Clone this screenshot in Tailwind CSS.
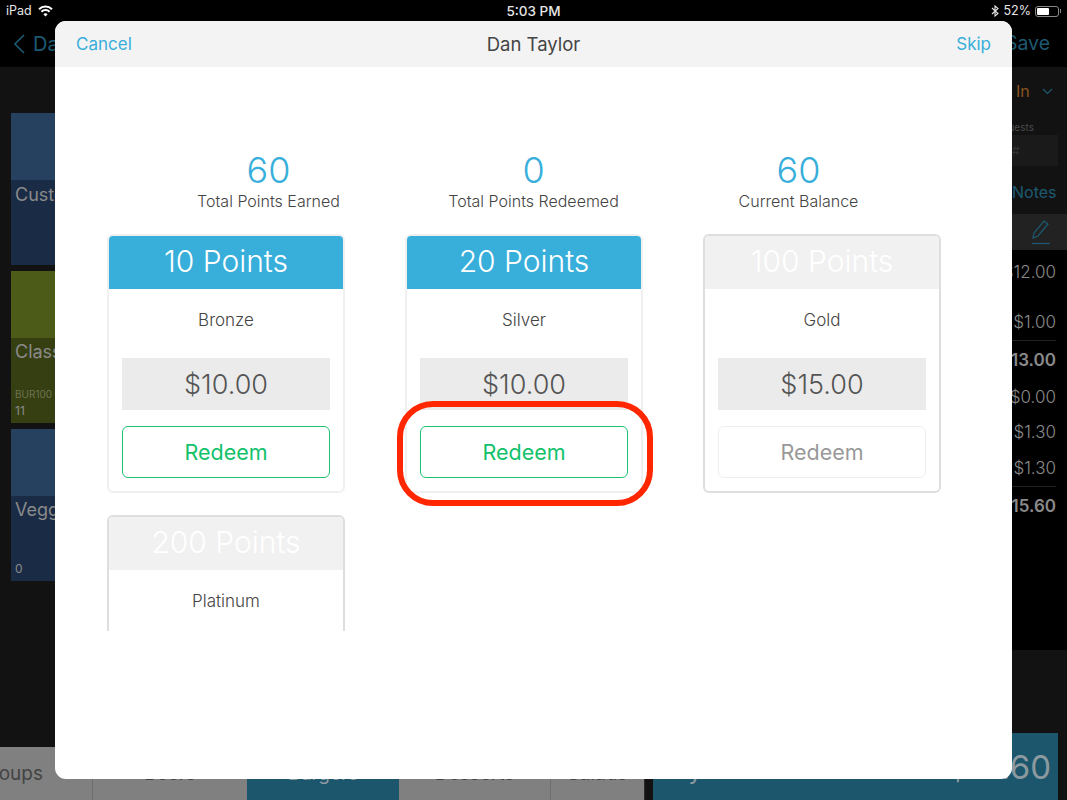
<!DOCTYPE html>
<html lang="en">
<head>
    <meta charset="UTF-8">
    <meta name="viewport" content="width=device-width, initial-scale=1.0">
    <title>Dan Taylor - Rewards</title>
    <script src="https://cdn.jsdelivr.net/npm/@tailwindcss/browser@4"></script>
</head>
<body class="bg-[#121212] font-[Inter,sans-serif]">
    <div class="relative w-[1067px] h-[800px] overflow-hidden flex flex-col">

        <!-- Status bar -->
        <div class="h-[20px] bg-black text-[#e6e6e6] text-[12.5px] grid grid-cols-3 items-center px-[6px] pt-[1px] shrink-0">
            <div class="flex items-center gap-[6px]">
                <span>iPad</span>
                <svg class="w-[15px] h-[12px]" viewBox="0 0 15 12" fill="none" stroke="#fff" stroke-width="2">
                    <path d="M1 4.2a9.2 9.2 0 0 1 13 0"></path>
                    <path d="M3.4 6.8a5.8 5.8 0 0 1 8.2 0"></path>
                    <path d="M7.5 11.5L5.4 9.2a3 3 0 0 1 4.2 0z" fill="#fff" stroke="none"></path>
                </svg>
            </div>
            <div class="text-center font-medium text-[13.5px]">5:03 PM</div>
            <div class="flex items-center justify-end gap-[4px]">
                <svg class="w-[8px] h-[12px]" viewBox="0 0 8 12" fill="none" stroke="#e6e6e6" stroke-width="1.1">
                    <path d="M1 3l6 5.5L4 11V1l3 2.5L1 9"></path>
                </svg>
                <span>52%</span>
                <div class="flex items-center">
                    <div class="w-[24px] h-[11px] border border-[#8a8a8a] rounded-[3px] p-[1px]">
                        <div class="w-[12px] h-full bg-white rounded-[1px]"></div>
                    </div>
                    <div class="w-[1px] h-[4px] bg-[#8a8a8a] ml-[1px]"></div>
                </div>
            </div>
        </div>

        <!-- Nav bar behind the modal -->
        <div class="h-[47px] bg-black flex items-center justify-between text-[20px] text-[#1d5a72] shrink-0">
            <div class="flex items-center gap-[8px] pl-[14px]">
                <svg class="w-[11px] h-[20px]" viewBox="0 0 11 20" fill="none" stroke="#1d5a72" stroke-width="1.6">
                    <path d="M10 1L1 10l9 9"></path>
                </svg>
                <span>Da</span>
            </div>
            <span class="pr-[17px] text-[19.5px]">Save</span>
        </div>

        <div class="flex-1 flex min-h-0">
            <!-- Left side: tiles and category tabs -->
            <div class="w-[644px] flex flex-col shrink-0">
                <div class="pt-[46px] pl-[11px] flex flex-col gap-[6px] text-[#8a8a8a] text-[18px]">
                    <div class="w-[150px] h-[152px] flex flex-col">
                        <div class="h-[67px] bg-[#26405f]"></div>
                        <div class="h-[85px] bg-[#1a2c45] px-[4px] pt-[1px]">Custom</div>
                    </div>
                    <div class="w-[150px] h-[152px] flex flex-col">
                        <div class="h-[67px] bg-[#4c5c18]"></div>
                        <div class="h-[85px] bg-[#363f12] px-[4px] flex flex-col">
                            <span>Classic</span>
                            <span class="mt-auto text-[10px] text-[#6d7350]">BUR100</span>
                            <span class="text-[12px] mb-[3px]">11</span>
                        </div>
                    </div>
                    <div class="w-[150px] h-[152px] flex flex-col">
                        <div class="h-[67px] bg-[#26405f]"></div>
                        <div class="h-[85px] bg-[#1a2c45] px-[4px] flex flex-col">
                            <span>Veggie</span>
                            <span class="mt-auto text-[12px] mb-[3px]">0</span>
                        </div>
                    </div>
                </div>
                <div class="mt-auto h-[53px] bg-[#808080] flex text-[19px] text-[#444]">
                    <div class="w-[93px] flex items-center justify-end pr-[49px] pt-[2px] whitespace-nowrap border-r border-[#6e6e6e]">Soups</div>
                    <div class="w-[154px] flex items-center justify-center pt-[2px]">Beers</div>
                    <div class="w-[152px] flex items-center justify-center pt-[2px] bg-[#1c566c] text-[#8c9a9f]">Burgers</div>
                    <div class="w-[152px] flex items-center justify-center pt-[2px] border-r border-[#6e6e6e]">Desserts</div>
                    <div class="flex-1 flex items-center justify-center pt-[2px]">Salads</div>
                </div>
            </div>

            <!-- Right side: order panel -->
            <div class="flex-1 flex flex-col border-l border-[#2a2a2a]">
                <div class="h-[147px] bg-[#121212] text-[#1d5a72] shrink-0 pl-[367px]">
                    <div class="flex items-center h-[48px] pl-[4px] text-[16px] text-[#8a5220]">
                        <span>In</span>
                        <svg class="w-[11px] h-[7px] ml-[12px]" viewBox="0 0 11 7" fill="none" stroke="#1d5a72" stroke-width="1.2">
                            <path d="M1 1l4.5 4.5L10 1"></path>
                        </svg>
                    </div>
                    <div class="text-[10px] mt-[5px] -ml-[11px] text-[#4a4a4a]">Guests</div>
                    <div class="h-[31px] w-[46px] bg-[#1a1a1a] text-[12px] text-[#333] flex items-center">#</div>
                    <div class="text-[16px] mt-[14px]">Notes</div>
                </div>
                <div class="h-[36px] bg-[#222] shrink-0 flex items-center justify-end pr-[16px]">
                    <svg class="w-[20px] h-[26px]" viewBox="0 0 20 26" fill="none" stroke="#1d5a72" stroke-width="1.2">
                        <path d="M2 19l1-5L13 2l4 3L7 17z"></path>
                        <path d="M1 24.5h18"></path>
                    </svg>
                </div>
                <div class="h-[400px] bg-black text-[#8a8a8a] text-[17px] flex flex-col items-end pr-[11px] shrink-0 font-light">
                    <div class="h-[44px] pt-[2px] flex items-center">$12.00</div>
                    <div class="h-[46px] pt-[12px] flex items-center">$1.00</div>
                    <div class="w-full h-[40px] flex items-center justify-end border-t border-[#222] font-semibold">$13.00</div>
                    <div class="h-[35px] flex items-center">$0.00</div>
                    <div class="h-[36px] flex items-center">$1.30</div>
                    <div class="h-[35px] flex items-center">$1.30</div>
                    <div class="w-full h-[40px] flex items-center justify-end border-t border-[#222] font-semibold">$15.60</div>
                </div>
                <div class="mt-auto ml-[8px] mr-[9px] h-[67px] bg-[#1c566c] text-[#8c9a9f] flex items-baseline justify-between px-[7px] pt-[18px]">
                    <span class="text-[24px] leading-[32px]">Pay</span>
                    <span class="text-[33px] leading-[32px]">$15.60</span>
                </div>
            </div>
        </div>

        <!-- Rewards modal -->
        <div class="absolute left-[55px] top-[21px] w-[957px] h-[758px] bg-white rounded-[11px] overflow-hidden flex flex-col">
            <div class="h-[46px] bg-[#f3f3f3] grid grid-cols-3 items-center px-[21px] pt-[1px] text-[17px] text-[#38aedb] shrink-0">
                <span>Cancel</span>
                <span class="text-center text-[18.5px] text-[#444]">Dan Taylor</span>
                <span class="text-right">Skip</span>
            </div>

            <div class="flex justify-center pt-[84px] text-center">
                <div class="w-[265px]">
                    <div class="text-[36px] leading-[38px] font-light text-[#38aedb]">60</div>
                    <div class="text-[16px] leading-[25px] font-light text-[#444]">Total Points Earned</div>
                </div>
                <div class="w-[265px]">
                    <div class="text-[36px] leading-[38px] font-light text-[#38aedb]">0</div>
                    <div class="text-[16px] leading-[25px] font-light text-[#444]">Total Points Redeemed</div>
                </div>
                <div class="w-[265px]">
                    <div class="text-[36px] leading-[38px] font-light text-[#38aedb]">60</div>
                    <div class="text-[16px] leading-[25px] font-light text-[#444]">Current Balance</div>
                </div>
            </div>

            <div class="mt-[20px] h-[397px] overflow-hidden pl-[52px] grid grid-cols-[238px_238px_238px] gap-x-[60px] gap-y-[22px] content-start text-center">
                <div class="h-[259px] border-2 border-[#f0f0f0] rounded-[6px] overflow-hidden">
                    <div class="h-[53px] pb-[2px] bg-[#38aedb] text-white text-[30px] font-light flex items-center justify-center">10 Points</div>
                    <div class="h-[64px] mb-[5px] flex items-center justify-center text-[17px] font-light text-[#444]">Bronze</div>
                    <div class="mx-[13px] h-[52px] pt-[3px] bg-[#ebebeb] text-[27px] font-light text-[#555] flex items-center justify-center">$10.00</div>
                    <div class="mx-[13px] mt-[16px] h-[52px] pt-[1px] border border-[#1cc271] rounded-[6px] text-[21.5px] text-[#12c16b] flex items-center justify-center">Redeem</div>
                </div>
                <div class="h-[259px] border-2 border-[#f0f0f0] rounded-[6px] overflow-hidden">
                    <div class="h-[53px] pb-[2px] bg-[#38aedb] text-white text-[30px] font-light flex items-center justify-center">20 Points</div>
                    <div class="h-[64px] mb-[5px] flex items-center justify-center text-[17px] font-light text-[#444]">Silver</div>
                    <div class="mx-[13px] h-[52px] pt-[3px] bg-[#ebebeb] text-[27px] font-light text-[#555] flex items-center justify-center">$10.00</div>
                    <div class="mx-[13px] mt-[16px] h-[52px] pt-[1px] border border-[#1cc271] rounded-[6px] text-[21.5px] text-[#12c16b] flex items-center justify-center">Redeem</div>
                </div>
                <div class="h-[259px] border-2 border-[#dedede] rounded-[6px] overflow-hidden">
                    <div class="h-[53px] pb-[2px] bg-[#f1f1f1] text-white text-[30px] font-light flex items-center justify-center">100 Points</div>
                    <div class="h-[64px] mb-[5px] flex items-center justify-center text-[17px] font-light text-[#444]">Gold</div>
                    <div class="mx-[13px] h-[52px] pt-[3px] bg-[#ebebeb] text-[27px] font-light text-[#555] flex items-center justify-center">$15.00</div>
                    <div class="mx-[13px] mt-[16px] h-[52px] pt-[1px] border border-[#eeeeee] rounded-[6px] text-[21.5px] text-[#999] flex items-center justify-center">Redeem</div>
                </div>
                <div class="h-[259px] border-2 border-[#dedede] rounded-[6px] overflow-hidden">
                    <div class="h-[53px] pb-[2px] bg-[#f1f1f1] text-white text-[30px] font-light flex items-center justify-center">200 Points</div>
                    <div class="h-[64px] mb-[5px] flex items-center justify-center text-[17px] font-light text-[#444]">Platinum</div>
                </div>
            </div>
        </div>

        <!-- Red highlight drawn over the screenshot -->
        <div class="absolute left-[397px] top-[401px] w-[256px] h-[105px] border-[6px] border-[#ff2600] rounded-[36px]"></div>
    </div>
</body>
</html>
